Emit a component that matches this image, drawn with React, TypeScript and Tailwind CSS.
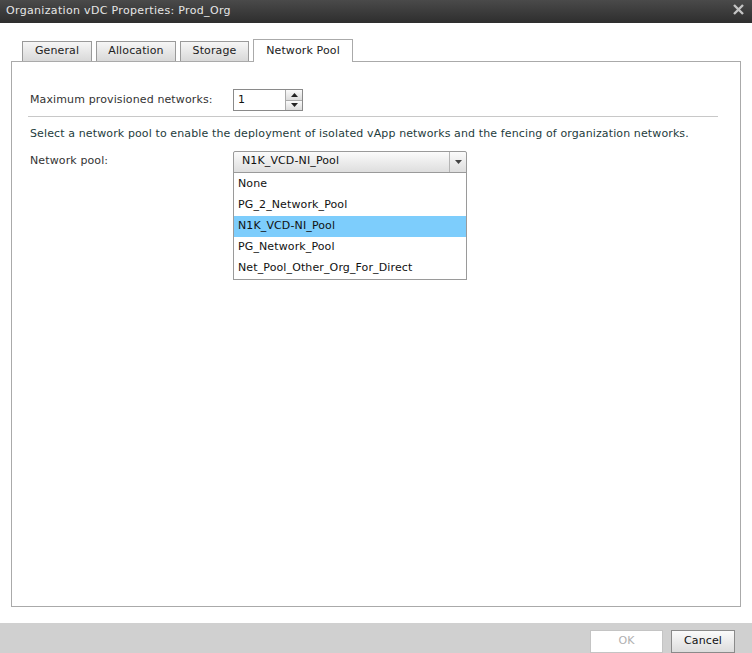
const TABS = [
  { name: 'General', w: 'w-[70px]' },
  { name: 'Allocation', w: 'w-[80px]' },
  { name: 'Storage', w: 'w-[69px]' },
]
const POOLS = ['None', 'PG_2_Network_Pool', 'N1K_VCD-NI_Pool', 'PG_Network_Pool', 'Net_Pool_Other_Org_For_Direct']

export default function App() {
  return (
    <div
      className="w-[752px] h-[653px] flex flex-col bg-white text-[11px] tracking-[0.12px] text-[#333]"
      style={{ fontFamily: '"DejaVu Sans", Verdana, sans-serif' }}
    >
      {/* title bar */}
      <div className="h-[23px] shrink-0 flex items-center justify-between pl-[6px] pr-[8px] bg-gradient-to-b from-[#4a4a4a] to-[#2e2e2e] text-[#e6e6e6]">
        <span className="tracking-[0.33px]">Organization vDC Properties: Prod_Org</span>
        <svg width="11" height="11" viewBox="0 0 11 11" className="mt-[-4px]">
          <path d="M1 1 L10 10 M10 1 L1 10" stroke="#c4c4c4" strokeWidth="2.4" />
        </svg>
      </div>

      <div className="flex-1 flex flex-col px-[11px] pt-[16px] pb-[16px] min-h-0">
        {/* tabs */}
        <div className="flex items-end gap-[4px] pl-[11px] h-[22px] shrink-0">
          {TABS.map((t) => (
            <div
              key={t.name}
              className={`${t.w} h-[20px] flex items-center justify-center border border-b-0 border-[#9a9a9a] bg-gradient-to-b from-[#f6f6f6] to-[#d9d9d9] text-[#222]`}
            >
              {t.name}
            </div>
          ))}
          <div className="w-[100px] h-[23px] mb-[-1px] flex items-center justify-center border border-b-0 border-[#aaa] bg-white text-[#222] relative z-10">
            Network Pool
          </div>
        </div>

        {/* panel */}
        <div className="flex-1 border border-[#aaa] relative px-[18px] pt-[27px]">
          <div className="flex items-center h-[22px]">
            <span className="w-[203px]">Maximum provisioned networks:</span>
            <div className="flex h-[22px] border border-[#8a8a8a]">
              <div className="w-[51px] pl-[4px] flex items-center bg-white text-[#111]">1</div>
              <div className="w-[17px] flex flex-col border-l border-[#aaa]">
                <div className="flex-1 flex items-center justify-center bg-gradient-to-b from-[#fafafa] to-[#dcdcdc] border-b border-[#aaa]">
                  <svg width="7" height="4" viewBox="0 0 7 4"><path d="M0 4 L3.5 0 L7 4 Z" fill="#222" /></svg>
                </div>
                <div className="flex-1 flex items-center justify-center bg-gradient-to-b from-[#fafafa] to-[#dcdcdc]">
                  <svg width="7" height="4" viewBox="0 0 7 4"><path d="M0 0 L3.5 4 L7 0 Z" fill="#222" /></svg>
                </div>
              </div>
            </div>
          </div>

          <div className="mt-[5px] ml-[-2px] mr-[4px] border-t border-[#c8c8c8]" />

          <p className="mt-[9px] text-[#1e3c3c]">
            Select a network pool to enable the deployment of isolated vApp networks and the fencing of organization networks.
          </p>

          <div className="flex items-center mt-[8px] h-[22px]">
            <span className="w-[203px]">Network pool:</span>
            <div className="relative">
              <div className="w-[234px] h-[22px] flex border border-[#9a9a9a] rounded-t-[2px] bg-gradient-to-b from-[#fbfbfb] to-[#dedede]">
                <div className="flex-1 flex items-center pl-[8px] text-[#111]">N1K_VCD-NI_Pool</div>
                <div className="w-[17px] flex items-center justify-center border-l border-[#b4b4b4]">
                  <svg width="7" height="4" viewBox="0 0 7 4"><path d="M0 0 L3.5 4 L7 0 Z" fill="#444" /></svg>
                </div>
              </div>
              <div className="absolute left-0 top-[21px] w-[234px] border border-[#9a9a9a] bg-white z-20 pt-[1px]">
                {POOLS.map((p) => (
                  <div
                    key={p}
                    className={`h-[21px] flex items-center pl-[4px] text-[#111] ${p === 'N1K_VCD-NI_Pool' ? 'bg-[#7dcdfc]' : ''}`}
                  >
                    {p}
                  </div>
                ))}
              </div>
            </div>
          </div>
        </div>
      </div>

      {/* footer */}
      <div className="h-[30px] shrink-0 bg-[#d0d0d0] flex items-end justify-end gap-[8px] pr-[17px]">
        <button className="w-[73px] h-[23px] border border-[#c4c4c4] bg-white text-[#b0b0b0]">OK</button>
        <button className="w-[64px] h-[23px] border border-[#8a8a8a] bg-gradient-to-b from-[#fbfbfb] to-[#dcdcdc] text-[#111]">Cancel</button>
      </div>
    </div>
  )
}
